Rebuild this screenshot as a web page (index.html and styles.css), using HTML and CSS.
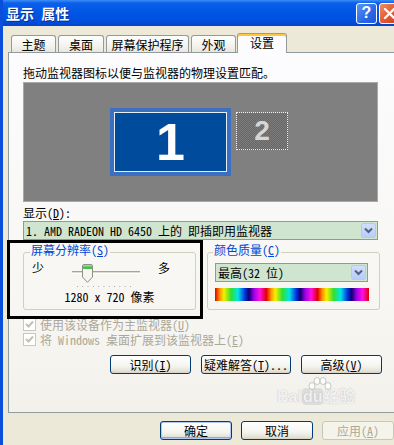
FILE: index.html
```html
<!DOCTYPE html>
<html lang="zh-CN">
<head>
    <meta charset="UTF-8">
    <meta name="viewport" content="width=device-width, initial-scale=1.0">
    <title>显示 属性</title>
    <link rel="stylesheet" href="styles.css">
</head>
<body>
    <div class="window">
        <div class="titlebar">
            <div class="title">显示 属性</div>
            <div class="caption-btns">
                <div class="btn-help">?</div>
                <div class="btn-close">
                    <svg width="13" height="13" viewBox="0 0 13 13"><path d="M2 2 L11 11 M11 2 L2 11" stroke="#fff" stroke-width="2.4" stroke-linecap="round"/></svg>
                </div>
            </div>
        </div>
        <div class="client">
            <div class="tabs">
                <div class="tab t1">主题</div>
                <div class="tab t2">桌面</div>
                <div class="tab t3">屏幕保护程序</div>
                <div class="tab t4">外观</div>
                <div class="tab active">设置</div>
            </div>
            <div class="panel">
                <div class="hint">拖动监视器图标以便与监视器的物理设置匹配。</div>
                <div class="monitors">
                    <div class="mon mon1"><div class="mon-inner">1</div></div>
                    <div class="mon mon2">2</div>
                </div>
                <div class="label">显示(<u>D</u>):</div>
                <div class="combo wide">
                    <span class="combo-text">1. AMD RADEON HD 6450 上的 即插即用监视器</span>
                    <span class="combo-btn">
                        <svg width="9" height="7" viewBox="0 0 9 7"><path d="M1 1.5 L4.5 5 L8 1.5" fill="none" stroke="#4d6185" stroke-width="2"/></svg>
                    </span>
                </div>
                <div class="groups">
                    <fieldset class="group res">
                        <legend>屏幕分辨率(<u>S</u>)</legend>
                        <div class="slider-row">
                            <span>少</span>
                            <div class="slider">
                                <div class="track"></div>
                                <svg class="thumb" width="11" height="19" viewBox="0 0 11 19">
                                    <path d="M0.5 2 Q0.5 0.5 2 0.5 H9 Q10.5 0.5 10.5 2 V13 L5.5 18.3 L0.5 13 Z" fill="#f6f6f2" stroke="#8f8f86"/>
                                    <rect x="1" y="1" width="9" height="4" fill="#4cbc4c"/>
                                    <rect x="1" y="1" width="9" height="1.5" fill="#8ee08e"/>
                                </svg>
                            </div>
                            <span class="more">多</span>
                        </div>
                        <div class="ticks"></div>
                        <div class="res-text">1280 x 720 像素</div>
                    </fieldset>
                    <fieldset class="group color">
                        <legend>颜色质量(<u>C</u>)</legend>
                        <div class="combo small">
                            <span class="combo-text">最高(32 位)</span>
                            <span class="combo-btn">
                                <svg width="9" height="7" viewBox="0 0 9 7"><path d="M1 1.5 L4.5 5 L8 1.5" fill="none" stroke="#4d6185" stroke-width="2"/></svg>
                            </span>
                        </div>
                        <div class="spectrum"></div>
                    </fieldset>
                </div>
                <div class="check first">
                    <span class="box"><svg width="11" height="11" viewBox="0 0 11 11"><path d="M2 5 L4.5 7.5 L9 2.5" fill="none" stroke="#c3c1b4" stroke-width="2"/></svg></span>
                    <span>使用该设备作为主监视器(<u>U</u>)</span>
                </div>
                <div class="check">
                    <span class="box"><svg width="11" height="11" viewBox="0 0 11 11"><path d="M2 5 L4.5 7.5 L9 2.5" fill="none" stroke="#c3c1b4" stroke-width="2"/></svg></span>
                    <span>将 Windows 桌面扩展到该监视器上(<u>E</u>)</span>
                </div>
                <div class="actions">
                    <div class="button w81">识别(<u>I</u>)</div>
                    <div class="button w90">疑难解答(<u>T</u>)...</div>
                    <div class="button w81">高级(<u>V</u>)</div>
                </div>
                <div class="watermark">
                    <svg class="paw" width="26" height="14" viewBox="0 0 26 14">
                        <g fill="rgba(255,255,255,0.85)" stroke="rgba(150,150,150,0.5)" stroke-width="1">
                            <ellipse cx="5" cy="9" rx="3" ry="3.5"/>
                            <ellipse cx="10" cy="4" rx="3" ry="3.5"/>
                            <ellipse cx="16" cy="4" rx="3" ry="3.5"/>
                            <ellipse cx="21" cy="9" rx="3" ry="3.5"/>
                        </g>
                    </svg>
                    Bai<span class="du">du</span>经验
                </div>
            </div>
            <div class="footer">
                <div class="button default">确定</div>
                <div class="button">取消</div>
                <div class="button disabled">应用(<u>A</u>)</div>
            </div>
        </div>
    </div>
    <div class="callout"></div>
</body>
</html>
```

FILE: styles.css
```css
*{
    box-sizing: border-box;
}
body,html{
    width: 100%;
    height: 100%;
    margin: 0;
    overflow: hidden;
}
body{
    position: relative;
    background: #ece9d8;
    font-family: "Noto Sans Mono CJK SC", "Noto Sans CJK SC", sans-serif;
    font-size: 12px;
    line-height: 14px;
    color: #000;
}
u{
    text-decoration: underline;
    text-underline-offset: 1px;
}
.window{
    width: 406px;
    height: 445px;
    border-left: 3px solid #0a4fdc;
    background: #ece9d8;
}
.titlebar{
    height: 26px;
    display: flex;
    align-items: center;
    padding: 0 6px 0 3px;
    background: linear-gradient(180deg, #3d8ef6 0, #0c60ea 3px, #0056e6 45%, #0050df 80%, #0044cc 100%);
}
.title{
    flex: 1;
    color: #fff;
    font-family: "Noto Sans CJK SC", sans-serif;
    font-weight: bold;
    font-size: 14px;
    word-spacing: 4px;
    text-shadow: 1px 1px 0 #0a2f8c;
}
.caption-btns{
    display: flex;
    gap: 2px;
}
.btn-help,
.btn-close{
    width: 21px;
    height: 21px;
    border: 1px solid #fff;
    border-radius: 3px;
    display: flex;
    align-items: center;
    justify-content: center;
    color: #fff;
}
.btn-help{
    background: linear-gradient(135deg, #5b95f7, #2a67e6 60%, #1f57d4);
    font-family: "Liberation Sans", sans-serif;
    font-weight: bold;
    font-size: 16px;
}
.btn-close{
    background: linear-gradient(135deg, #f08c6a, #e2572f 55%, #cb3f1c);
}
.tabs{
    display: flex;
    align-items: flex-start;
    height: 19px;
    margin-top: 7px;
    padding-left: 8px;
}
.tab{
    height: 17px;
    margin-top: 2px;
    padding-top: 2px;
    text-align: center;
    border: 1px solid #919b9c;
    border-bottom: none;
    border-radius: 3px 3px 0 0;
    background: linear-gradient(#fefefe, #f4f3ee 60%, #e7e6df);
}
.t1{ width: 45px; }
.t2{ width: 46px; margin-left: 2px; }
.t3{ width: 83px; margin-left: 2px; }
.t4{ width: 45px; margin-left: 2px; }
.tab.active{
    position: relative;
    z-index: 1;
    width: 50px;
    height: 20px;
    margin-top: 0;
    margin-left: 1px;
    padding-top: 2px;
    background: #fcfcfe;
    border-top-color: #e68b2c;
    box-shadow: inset 0 2px 0 #ffc73c;
}
.panel{
    position: relative;
    width: 392px;
    height: 361px;
    margin-left: 5px;
    padding: 13px 0 0 14px;
    border: 1px solid #919b9c;
    background: linear-gradient(#fcfcfe, #f7f6f2 70%, #f2f1ec);
}
.hint{
    height: 14px;
}
.monitors{
    position: relative;
    width: 355px;
    height: 120px;
    margin-top: 2px;
    background: #808080;
    border: 1px solid #a8a8a8;
}
.mon{
    position: absolute;
}
.mon1{
    left: 86px;
    top: 25px;
    width: 121px;
    height: 68px;
    padding: 4px;
    background: #3b6fc2;
}
.mon-inner{
    width: 100%;
    height: 100%;
    border: 1px solid #e6eef8;
    background: #004b9b;
    display: flex;
    align-items: center;
    justify-content: center;
    color: #fff;
    font-family: "Liberation Sans", sans-serif;
    font-weight: bold;
    font-size: 52px;
    line-height: 52px;
}
.mon2{
    left: 212px;
    top: 29px;
    width: 52px;
    height: 38px;
    border: 1px dotted #f0f0f0;
    background: conic-gradient(#3d6db5 25%, #7c7c7c 0 50%, #3d6db5 0 75%, #7c7c7c 0);
    background-size: 2px 2px;
    display: flex;
    align-items: center;
    justify-content: center;
    color: #d6d6d6;
    font-family: "Liberation Sans", sans-serif;
    font-weight: bold;
    font-size: 28px;
    line-height: 28px;
}
.label{
    margin-top: 4px;
}
.combo{
    display: flex;
    align-items: center;
    height: 19px;
    border: 1px solid #7f9db9;
    background: #cfe5cf;
}
.combo.wide{
    width: 355px;
    margin-top: 1px;
}
.combo-text{
    flex: 1;
    padding-left: 2px;
    white-space: pre;
}
.combo-btn{
    width: 15px;
    height: 15px;
    margin-right: 1px;
    border: 1px solid #b6c9f2;
    border-radius: 2px;
    background: linear-gradient(#d2defb, #b9cdf7);
    display: flex;
    align-items: center;
    justify-content: center;
}
.groups{
    display: flex;
    gap: 11px;
    margin-top: 3px;
}
.group{
    width: 173px;
    min-width: 0;
    margin: 0;
    border: 1px solid #d0d0bf;
    border-radius: 3px;
}
.group legend{
    margin-left: -2px;
    padding: 0 1px 4px;
    color: #0046d5;
    line-height: 14px;
}
.res{
    padding: 0 8px 5px;
}
.color{
    padding: 0 7px 8px;
}
.slider-row{
    display: flex;
    height: 22px;
}
.slider{
    position: relative;
    width: 68px;
    height: 22px;
    margin-left: 28px;
}
.track{
    position: absolute;
    left: 0;
    right: 0;
    top: 10px;
    height: 3px;
    border-top: 1px solid #a5a497;
    border-bottom: 1px solid #fff;
    background: #dedcd2;
}
.thumb{
    position: absolute;
    left: 10px;
    top: 3px;
}
.more{
    margin-left: 18px;
}
.ticks{
    width: 54px;
    height: 1px;
    margin: 3px 0 0 45px;
    background: linear-gradient(to right, #a0a0a0 1px, transparent 1px);
    background-size: 5.3px 1px;
}
.res-text{
    margin-top: 3px;
    text-align: center;
    white-space: pre;
}
.combo.small{
    width: 153px;
    margin-top: 2px;
}
.spectrum{
    width: 154px;
    height: 13px;
    margin-top: 6px;
    background: repeating-linear-gradient(to right, #e00000 0, #ff9a00 5px, #f6f000 9px, #30e030 16px, #00e6e6 23px, #0030e0 30px, #100070 34px, #a000e8 39px, #ff10e0 45px, #e00000 51.3px);
}
.check{
    display: flex;
    align-items: center;
    height: 15px;
    line-height: 13px;
    color: #aca899;
    white-space: pre;
}
.check.first{
    margin-top: 7px;
}
.box{
    width: 13px;
    height: 13px;
    margin-right: 4px;
    border: 1px solid #cac8bb;
    background: #fff;
    display: flex;
    align-items: center;
    justify-content: center;
}
.actions{
    display: flex;
    gap: 10px;
    margin-top: 8px;
    padding-left: 87px;
}
.button{
    height: 19px;
    width: 72px;
    border: 1px solid #003c74;
    border-radius: 3px;
    background: linear-gradient(#ffffff, #f4f4ef 60%, #e3e0d6 90%, #d6d0c5);
    text-align: center;
    line-height: 17px;
    white-space: pre;
}
.button.w81{ width: 81px; }
.button.w90{ width: 90px; }
.button.default{
    box-shadow: inset 0 0 0 1px #b0c8f2, inset 0 -1px 0 1px #8aaae6;
}
.button.disabled{
    border-color: #c9c7ba;
    background: #f5f4ea;
    color: #aca899;
}
.footer{
    display: flex;
    gap: 9px;
    margin-top: 8px;
    padding-left: 157px;
}
.watermark{
    position: absolute;
    left: 268px;
    top: 336px;
    font-family: "Liberation Sans", "Noto Sans CJK SC", sans-serif;
    font-weight: bold;
    font-size: 16px;
    line-height: 16px;
    color: rgba(255, 255, 255, 0.85);
    text-shadow: 0 0 1px rgba(120, 120, 120, 0.6);
}
.watermark .du{
    padding: 0 1px;
    border-radius: 4px;
    background: rgba(200, 200, 200, 0.5);
}
.watermark .paw{
    position: absolute;
    left: 30px;
    top: -12px;
}
.callout{
    position: absolute;
    left: 7px;
    top: 240px;
    width: 196px;
    height: 79px;
    border: 3px solid #000;
}
```
